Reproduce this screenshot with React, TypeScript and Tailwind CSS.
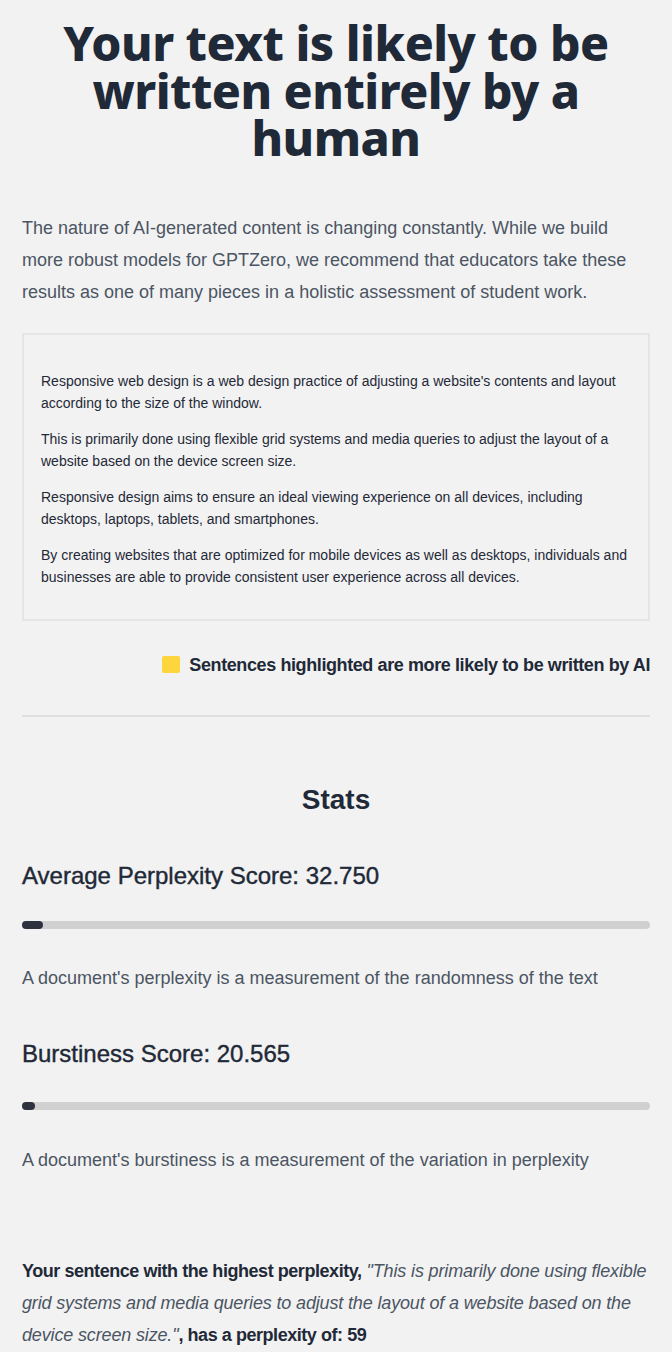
import React from "react";

const body = { fontFamily: '"Liberation Sans", Arial, sans-serif' };
const heavy = { fontFamily: '"Noto Sans", "Liberation Sans", sans-serif' };

function Bar({ fill }: { fill: number }) {
  return (
    <div className="h-[8px] w-full rounded-full bg-[#d0d0d0]">
      <div className="h-[8px] rounded-full bg-[#2d323e]" style={{ width: fill }} />
    </div>
  );
}

export default function App() {
  return (
    <div className="min-h-screen bg-[#f2f2f2] px-[22px]" style={body}>
      <h1
        className="pt-[19px] text-center text-[48px] leading-[47.5px] font-extrabold tracking-[-0.5px] text-[#1f2937]"
        style={heavy}
      >
        Your text is likely to be written entirely by a human
      </h1>

      <p className="mt-[50px] text-[18px] leading-[32px] text-[#4b5563]">
        The nature of AI-generated content is changing constantly. While we build more robust
        models for GPTZero, we recommend that educators take these results as one of many pieces
        in a holistic assessment of student work.
      </p>

      <div className="mt-[25px] border-2 border-[#e5e5e7] px-[17px] pt-[35px] pb-[31px] text-[14px] leading-[22px] text-[#1f2937]">
        <p>
          Responsive web design is a web design practice of adjusting a website's contents and
          layout according to the size of the window.
        </p>
        <p className="mt-[14px]">
          This is primarily done using flexible grid systems and media queries to adjust the layout
          of a website based on the device screen size.
        </p>
        <p className="mt-[14px]">
          Responsive design aims to ensure an ideal viewing experience on all devices, including
          desktops, laptops, tablets, and smartphones.
        </p>
        <p className="mt-[14px]">
          By creating websites that are optimized for mobile devices as well as desktops,
          individuals and businesses are able to provide consistent user experience across all
          devices.
        </p>
      </div>

      <div className="mt-[32px] flex items-center justify-end gap-[9px]">
        <span className="h-[17px] w-[18px] rounded-[2px] bg-[#fdd53d]" />
        <span className="text-[18px] leading-[24px] font-semibold tracking-[-0.4px] text-[#1f2937]">
          Sentences highlighted are more likely to be written by AI
        </span>
      </div>

      <div className="mt-[38px] h-[2px] w-full bg-[#e0e0e0]" />

      <h2 className="mt-[65px] text-center text-[28px] leading-[36px] font-bold text-[#1f2937]">
        Stats
      </h2>

      <h3 className="mt-[42px] text-[24px] leading-[32px] font-normal text-[#1f2937] [-webkit-text-stroke:0.4px_#1f2937]">
        Average Perplexity Score: 32.750
      </h3>
      <div className="mt-[29px]">
        <Bar fill={21} />
      </div>
      <p className="mt-[33px] text-[18px] leading-[32px] text-[#4b5563]">
        A document's perplexity is a measurement of the randomness of the text
      </p>

      <h3 className="mt-[44px] text-[24px] leading-[32px] font-normal text-[#1f2937] [-webkit-text-stroke:0.4px_#1f2937]">
        Burstiness Score: 20.565
      </h3>
      <div className="mt-[32px]">
        <Bar fill={13} />
      </div>
      <p className="mt-[34px] text-[18px] leading-[32px] text-[#4b5563]">
        A document's burstiness is a measurement of the variation in perplexity
      </p>

      <p className="mt-[79px] text-[18px] leading-[32px] text-[#4b5563]">
        <span className="font-semibold tracking-[-0.45px] text-[#1f2937]">
          Your sentence with the highest perplexity,
        </span>{" "}
        <i className="tracking-[-0.15px]">
          "This is primarily done using flexible grid systems and media queries to adjust the
          layout of a website based on the device screen size."
        </i>
        <span className="font-semibold tracking-[-0.45px] text-[#1f2937]">
          , has a perplexity of: 59
        </span>
      </p>
    </div>
  );
}
